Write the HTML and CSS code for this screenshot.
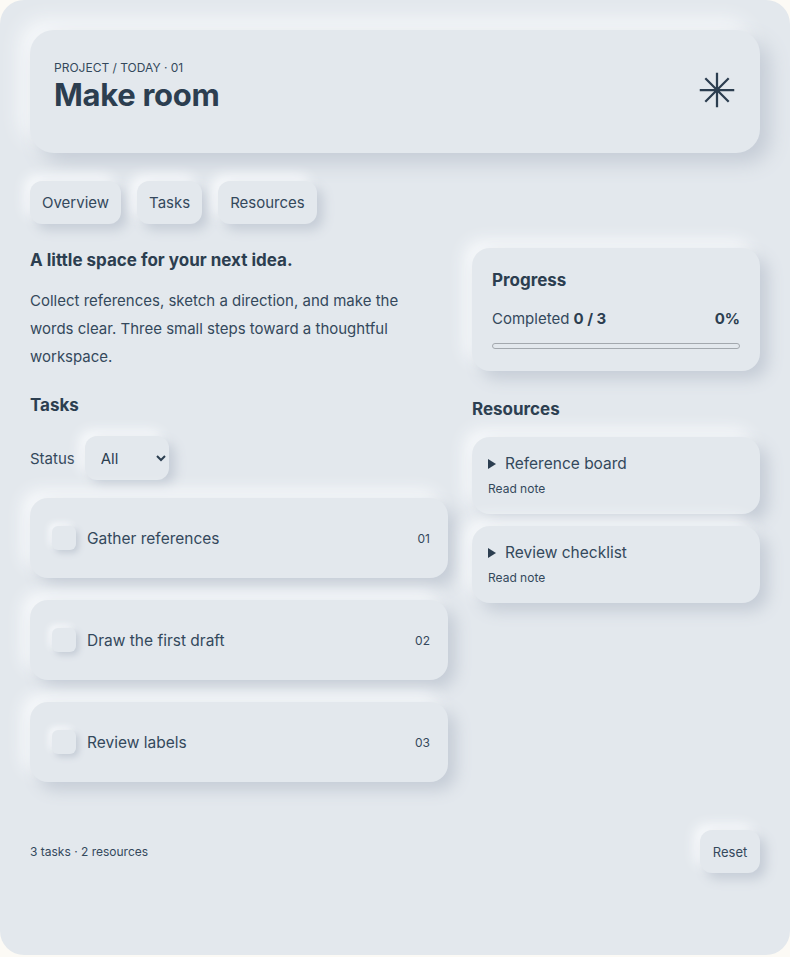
FILE: index.html
```html
<!DOCTYPE html>
<html lang="en">
<head>
<meta charset="utf-8">
<title>Make room</title>
<link rel="stylesheet" href="styles.css">
</head>
<body>
<div class="app">
  <header class="hero">
    <div class="hero-text">
      <div class="eyebrow">PROJECT / TODAY · 01</div>
      <h1 class="title">Make room</h1>
    </div>
    <svg class="mark" viewBox="0 0 24 24" width="36" height="36" aria-hidden="true">
      <path d="M12 0.5v23M0.5 12h23M4.2 4.2l15.6 15.6M19.8 4.2L4.2 19.8" fill="none" stroke="#2c3e50" stroke-width="1.5"/>
    </svg>
  </header>

  <nav class="tabs">
    <button class="tab">Overview</button>
    <button class="tab">Tasks</button>
    <button class="tab">Resources</button>
  </nav>

  <main class="grid">
    <section class="left">
      <h2 class="lead">A little space for your next idea.</h2>
      <p class="intro">Collect references, sketch a direction, and make the words clear. Three small steps toward a thoughtful workspace.</p>

      <h3 class="section-title">Tasks</h3>
      <div class="filter">
        <label class="filter-label" for="status">Status</label>
        <select id="status" class="select">
          <option>All</option>
        </select>
      </div>

      <ul class="tasks">
        <li class="task"><span class="check"></span><span class="task-name">Gather references</span><span class="task-num">01</span></li>
        <li class="task"><span class="check"></span><span class="task-name">Draw the first draft</span><span class="task-num">02</span></li>
        <li class="task"><span class="check"></span><span class="task-name">Review labels</span><span class="task-num">03</span></li>
      </ul>
    </section>

    <aside class="right">
      <div class="card progress-card">
        <h3 class="section-title">Progress</h3>
        <div class="progress-row">
          <span>Completed <b>0 / 3</b></span>
          <b>0%</b>
        </div>
        <div class="bar"><div class="bar-fill" style="width:0%"></div></div>
      </div>

      <h3 class="section-title res-title">Resources</h3>
      <div class="resources">
        <div class="card res">
          <div class="res-summary"><span class="tri"></span>Reference board</div>
          <div class="res-note">Read note</div>
        </div>
        <div class="card res">
          <div class="res-summary"><span class="tri"></span>Review checklist</div>
          <div class="res-note">Read note</div>
        </div>
      </div>
    </aside>
  </main>

  <footer class="footer">
    <span class="count">3 tasks · 2 resources</span>
    <button class="reset">Reset</button>
  </footer>
</div>
</body>
</html>
```

FILE: styles.css
```css
* { box-sizing: border-box; }

html, body {
  margin: 0;
  padding: 0;
  background: #fcfaf5;
}

body {
  font-family: "Inter", "Noto Sans", sans-serif;
  color: #2c3e50;
}

.app {
  background: #e3e8ed;
  border-radius: 24px;
  min-height: 955px;
  padding: 30px 30px 40px;
}

.hero {
  display: flex;
  align-items: center;
  justify-content: space-between;
  padding: 29px 24px 39px 24px;
  border-radius: 24px;
  background: #e3e8ed;
  box-shadow: 10px 10px 20px #c5ccd6, -10px -10px 20px #f7f9fb;
}

.eyebrow {
  font-size: 12px;
  line-height: 18px;
  color: #34485c;
}

.title {
  margin: -1px 0 0;
  font-size: 31px;
  line-height: 38px;
  font-weight: 700;
  letter-spacing: -0.3px;
  color: #2c3e50;
}

.mark {
  margin-right: 1px;
  margin-top: 6px;
}

.tabs {
  display: flex;
  gap: 16px;
  margin-top: 28px;
}

.tab, .reset {
  font-family: inherit;
  font-size: 15px;
  color: #34485c;
  border: none;
  background: #e3e8ed;
  border-radius: 12px;
  height: 43px;
  padding: 0 12px;
  box-shadow: 6px 6px 12px #c5ccd6, -6px -6px 12px #f7f9fb;
}

.grid {
  display: grid;
  grid-template-columns: 418px 288px;
  column-gap: 24px;
  margin-top: 24px;
  align-items: start;
}

.lead {
  margin: 0;
  font-size: 17px;
  line-height: 24px;
  font-weight: 700;
}

.intro {
  margin: 15px 0 0;
  max-width: 400px;
  font-size: 15px;
  line-height: 28px;
  color: #34485c;
}

.section-title {
  margin: 0;
  font-size: 17px;
  line-height: 24px;
  font-weight: 700;
}

.left .section-title {
  margin-top: 22px;
}

.filter {
  display: flex;
  align-items: center;
  gap: 10px;
  margin-top: 19px;
}

.filter-label {
  font-size: 15px;
  color: #34485c;
}

.select {
  font-family: inherit;
  font-size: 15px;
  color: #2c3e50;
  width: 84px;
  height: 44px;
  padding: 0 10px 0 12px;
  border: none;
  border-radius: 12px;
  background: #e3e8ed;
  box-shadow: 6px 6px 12px #c5ccd6, -6px -6px 12px #f7f9fb;
}

.tasks {
  list-style: none;
  margin: 18px 0 0;
  padding: 0;
  display: flex;
  flex-direction: column;
  gap: 22px;
}

.task {
  display: flex;
  align-items: center;
  height: 80px;
  padding: 0 18px 0 22px;
  border-radius: 18px;
  background: #e3e8ed;
  box-shadow: 8px 8px 16px #c5ccd6, -8px -8px 16px #f7f9fb;
}

.check {
  width: 24px;
  height: 24px;
  border-radius: 6px;
  background: #e3e8ed;
  box-shadow: 3px 3px 6px #c5ccd6, -3px -3px 6px #f7f9fb;
  flex: none;
}

.task-name {
  margin-left: 11px;
  flex: 1;
  font-size: 15.5px;
  color: #34485c;
}

.task-num {
  font-size: 12px;
  color: #34485c;
}

.card {
  background: #e3e8ed;
  border-radius: 18px;
  box-shadow: 8px 8px 16px #c5ccd6, -8px -8px 16px #f7f9fb;
}

.progress-card {
  padding: 20px 20px 22px;
}

.progress-row {
  display: flex;
  justify-content: space-between;
  margin-top: 17px;
  font-size: 15px;
  line-height: 20px;
  color: #34485c;
}

.progress-row b {
  color: #2c3e50;
}

.bar {
  margin-top: 14px;
  height: 6px;
  border: 1px solid #a3a8ae;
  border-radius: 6px;
  overflow: hidden;
}

.bar-fill {
  height: 100%;
  background: #2c3e50;
}

.res-title {
  margin-top: 26px;
}

.resources {
  display: flex;
  flex-direction: column;
  gap: 12px;
  margin-top: 16px;
}

.res {
  padding: 16px 16px 16px;
}

.res-summary {
  display: flex;
  align-items: center;
  font-size: 15.5px;
  line-height: 22px;
  color: #34485c;
}

.tri {
  width: 0;
  height: 0;
  border-left: 8px solid #2c3e50;
  border-top: 5px solid transparent;
  border-bottom: 5px solid transparent;
  margin-right: 9px;
}

.res-note {
  margin-top: 5px;
  font-size: 12px;
  line-height: 18px;
  color: #34485c;
}

.footer {
  display: flex;
  justify-content: space-between;
  align-items: center;
  margin-top: 48px;
}

.count {
  font-size: 12px;
  color: #34485c;
}

.reset {
  font-size: 13px;
  width: 60px;
  padding: 0;
}
```
